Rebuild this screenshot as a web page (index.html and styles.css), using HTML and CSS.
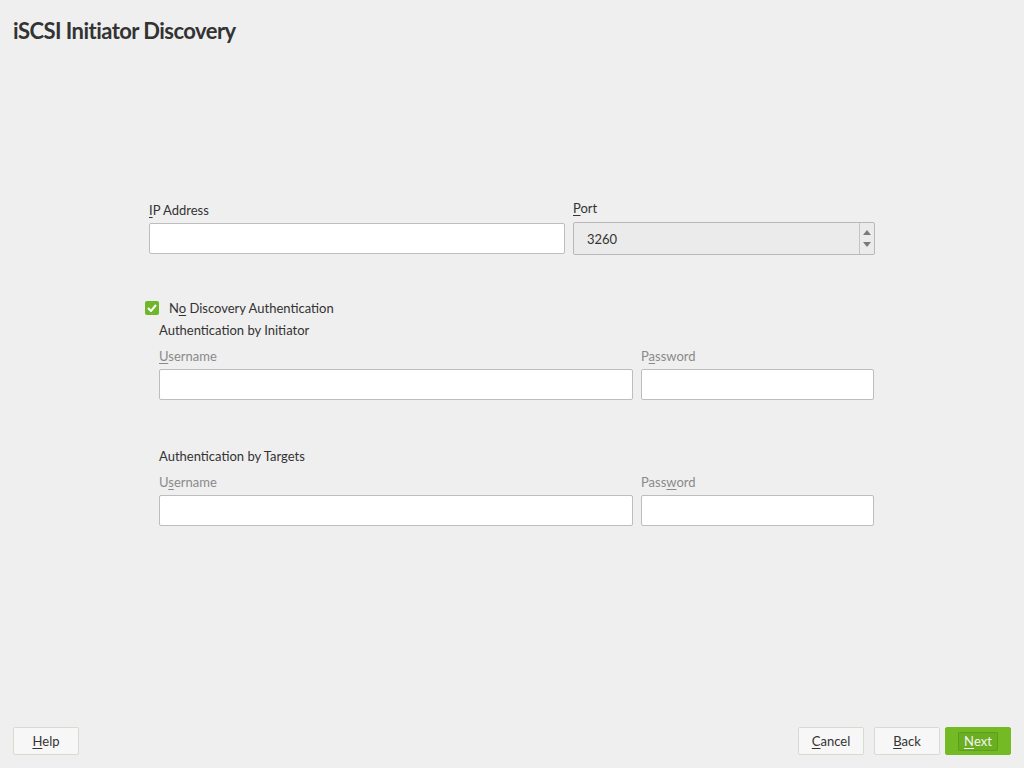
FILE: index.html
```html
<!DOCTYPE html>
<html>
<head>
<meta charset="utf-8">
<link rel="stylesheet" href="styles.css">
</head>
<body>
<div class="page">
  <h1 class="title">iSCSI Initiator Discovery</h1>
  <main class="content">
    <div class="row-top">
      <div class="field ip">
        <label class="lbl"><u>I</u>P Address</label>
        <div class="input"></div>
      </div>
      <div class="field port">
        <label class="lbl"><u>P</u>ort</label>
        <div class="spin">
          <span class="spin-val">3260</span>
          <span class="spin-btns">
            <svg width="8" height="5" viewBox="0 0 8 5"><path d="M0 5 L4 0 L8 5Z" fill="#7a7a7a"/></svg>
            <svg width="8" height="5" viewBox="0 0 8 5"><path d="M0 0 L4 5 L8 0Z" fill="#7a7a7a"/></svg>
          </span>
        </div>
      </div>
    </div>

    <div class="check-row">
      <span class="checkbox">
        <svg width="10" height="8" viewBox="0 0 10 8"><path d="M1 4 L4 7 L9 1" fill="none" stroke="#fff" stroke-width="2"/></svg>
      </span>
      <span class="check-label">N<u>o</u> Discovery Authentication</span>
    </div>

    <section class="auth">
      <div class="auth-title">Authentication by Initiator</div>
      <div class="auth-grid">
        <div class="field">
          <label class="lbl dim"><u>U</u>sername</label>
          <div class="input"></div>
        </div>
        <div class="field">
          <label class="lbl dim">P<u>a</u>ssword</label>
          <div class="input"></div>
        </div>
      </div>
    </section>

    <section class="auth second">
      <div class="auth-title">Authentication by Targets</div>
      <div class="auth-grid">
        <div class="field">
          <label class="lbl dim">U<u>s</u>ername</label>
          <div class="input"></div>
        </div>
        <div class="field">
          <label class="lbl dim">Pass<u>w</u>ord</label>
          <div class="input"></div>
        </div>
      </div>
    </section>
  </main>
  <footer class="footer">
    <button class="btn"><u>H</u>elp</button>
    <div class="spacer"></div>
    <button class="btn"><u>C</u>ancel</button>
    <button class="btn back"><u>B</u>ack</button>
    <button class="btn primary"><span class="focus"><u>N</u>ext</span></button>
  </footer>
</div>
</body>
</html>
```

FILE: styles.css
```css
* { box-sizing: border-box; }
html, body {
  margin: 0;
  padding: 0;
  background: #efefef;
}
body {
  font-family: "Lato", "Open Sans", sans-serif;
  font-size: 13px;
  color: #333;
}
.page {
  width: 1024px;
  height: 768px;
  display: flex;
  flex-direction: column;
}
.title {
  margin: 0;
  padding: 17px 0 0 13px;
  font-size: 22px;
  font-weight: 700;
  color: #333;
  line-height: 28px;
  letter-spacing: -0.55px;
}
.content {
  flex: 1;
  padding: 155px 0 0 149px;
}
u {
  text-decoration: underline;
  text-underline-offset: 2px;
}
.row-top {
  display: grid;
  grid-template-columns: 416px 302px;
  column-gap: 8px;
  align-items: end;
}
.field {
  display: flex;
  flex-direction: column;
}
.lbl {
  line-height: 16px;
  margin-bottom: 5px;
  color: #333;
}
.lbl.dim { color: #8a8a8a; }
.input {
  height: 31px;
  background: #fff;
  border: 1px solid #bdbdbd;
  border-radius: 2px;
}
.port .lbl { margin-bottom: 6px; }
.spin {
  height: 33px;
  background: #ebebeb;
  border: 1px solid #b8b8b8;
  border-radius: 2px;
  display: flex;
  align-items: stretch;
  margin-bottom: -1px;
}
.spin-val {
  flex: 1;
  padding-left: 13px;
  display: flex;
  align-items: center;
  color: #333;
}
.spin-btns {
  width: 15px;
  border-left: 1px solid #c4c4c4;
  display: flex;
  flex-direction: column;
  justify-content: space-between;
  align-items: center;
  padding: 7px 0 7px;
}
.check-row {
  display: flex;
  align-items: center;
  margin: 46px 0 0 -4px;
  height: 16px;
}
.checkbox {
  width: 14px;
  height: 14px;
  background: #6fb62a;
  border-radius: 2px;
  display: flex;
  align-items: center;
  justify-content: center;
  margin-right: 10px;
}
.check-label { line-height: 16px; }
.auth {
  padding-left: 10px;
  width: 735px;
}
.auth-title {
  margin-top: 6px;
  line-height: 16px;
  height: 16px;
}
.auth-grid {
  display: grid;
  grid-template-columns: 474px 233px;
  column-gap: 8px;
  margin-top: 10px;
}
.auth-grid .lbl { margin-bottom: 5px; }
.auth.second { margin-top: 48px; }
.auth.second .auth-title { margin-top: 0; }
.footer {
  display: flex;
  align-items: center;
  padding: 0 13px 13px 13px;
  gap: 10px;
}
.spacer { flex: 1; }
.btn {
  width: 66px;
  height: 28px;
  background: #f7f7f7;
  border: 1px solid #d3ddd0;
  border-radius: 2px;
  font-family: inherit;
  font-size: 13px;
  color: #333;
  padding: 0;
  display: flex;
  align-items: center;
  justify-content: center;
}
.btn.back { margin-right: -5px; }
.btn.primary {
  background: #73ba25;
  border-color: #73ba25;
  color: #f4f4f4;
}
.focus {
  display: inline-flex;
  align-items: center;
  justify-content: center;
  width: 40px;
  height: 19px;
  border: 1px solid #5c9f1d;
  background: #6aae21;
  border-radius: 1px;
}
```
